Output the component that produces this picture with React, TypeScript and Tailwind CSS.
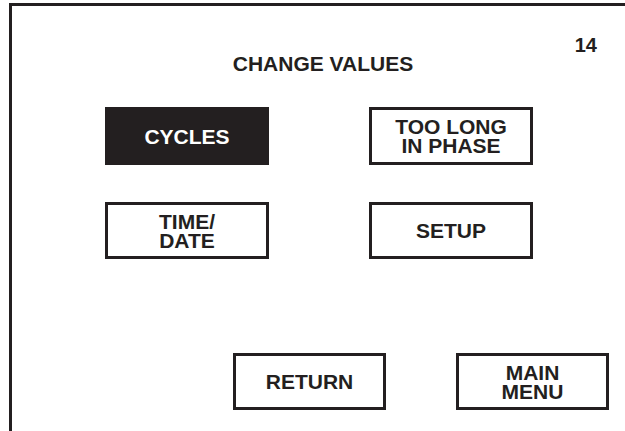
import React from "react";

const INK = "#231f20";

function Btn({ label, active, w, h }: { label: string[]; active?: boolean; w: string; h: string }) {
  return (
    <div
      className={`${w} ${h} flex flex-col items-center justify-center border-[3px] border-[#231f20] text-[21px] leading-[19px] font-bold ${
        active ? "bg-[#231f20] text-white" : "bg-white text-[#231f20]"
      }`}
    >
      {label.map((l) => (
        <span key={l}>{l}</span>
      ))}
    </div>
  );
}

export default function App() {
  return (
    <div
      className="w-[625px] h-[431px] overflow-hidden bg-white"
      style={{ fontFamily: '"Liberation Sans", Arial, sans-serif', color: INK }}
    >
      <div className="ml-[9px] mt-[3px] h-[440px] w-[640px] border-l-[3px] border-t-[3px] border-[#231f20]">
        <div className="w-[613px]">
          <div className="mt-[29px] pr-[28px] text-right text-[20px] leading-none font-bold">14</div>
          <div className="-mt-[2px] pl-[9px] text-center text-[21px] leading-none font-bold">CHANGE VALUES</div>

          <div className="mt-[33px] pl-[93px] grid grid-cols-[164px_164px] gap-x-[100px] gap-y-[37px]">
            <Btn label={["CYCLES"]} active w="w-[164px]" h="h-[58px]" />
            <Btn label={["TOO LONG", "IN PHASE"]} w="w-[164px]" h="h-[58px]" />
            <Btn label={["TIME/", "DATE"]} w="w-[164px]" h="h-[57px]" />
            <Btn label={["SETUP"]} w="w-[164px]" h="h-[57px]" />
          </div>

          <div className="mt-[94px] pl-[221px] flex gap-[70px]">
            <Btn label={["RETURN"]} w="w-[153px]" h="h-[57px]" />
            <Btn label={["MAIN", "MENU"]} w="w-[153px]" h="h-[57px]" />
          </div>
        </div>
      </div>
    </div>
  );
}
